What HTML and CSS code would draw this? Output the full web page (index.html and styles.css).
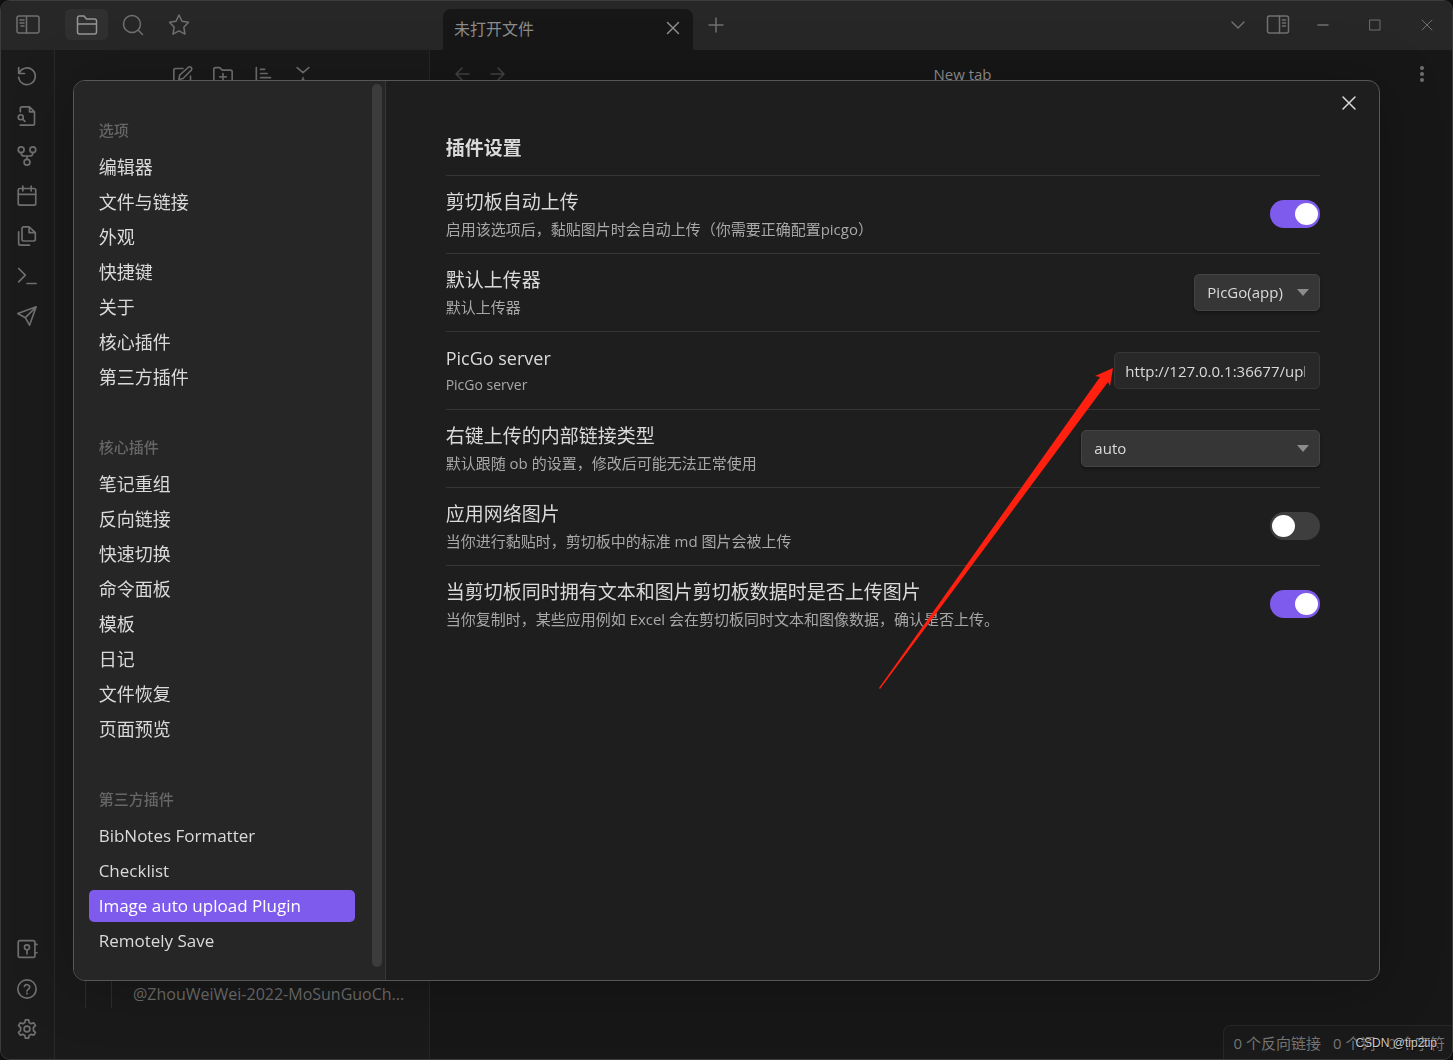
FILE: index.html
```html
<!DOCTYPE html>
<html lang="zh-CN">
<head>
<meta charset="utf-8">
<title>插件设置</title>
<link rel="stylesheet" href="styles.css">
</head>
<body>
<div class="app">
  <header class="titlebar">
    <div class="titlebar-left">
      <button class="icon-btn" aria-label="切换左侧栏"><svg class="icon panel" viewBox="0 0 24 20"><rect x="1" y="1" width="22" height="17" rx="2"/><path d="M10.500 1v17M4 5h4M4 8h4M5 11h3"/></svg></button>
      <nav class="side-tabs">
        <button class="icon-btn tab-btn active" aria-label="文件列表"><svg class="icon large" viewBox="0 0 24 24"><path d="M2.500 19V5a2 2 0 0 1 2-2h4.500l2.500 3h8a2 2 0 0 1 2 2v11a2 2 0 0 1-2 2h-15a2 2 0 0 1-2-2zM2.500 11h19"/></svg></button>
        <button class="icon-btn tab-btn" aria-label="搜索"><svg class="icon large" viewBox="0 0 24 24"><circle cx="11" cy="11" r="8.500"/><path d="m17.500 17.500 4 4"/></svg></button>
        <button class="icon-btn tab-btn" aria-label="星标"><svg class="icon large" viewBox="0 0 24 24"><path d="m12 2 3 6.300 6.500 1-4.700 4.900 1.200 6.900L12 17.800l-6 3.300 1.200-6.900-4.700-4.900 6.500-1z"/></svg></button>
      </nav>
    </div>
    <div class="file-tab"><span>未打开文件</span><button class="icon-btn" aria-label="关闭标签页"><svg class="icon small" viewBox="0 0 12 12"><path d="m.5.5 11 11M11.500.5l-11 11"/></svg></button></div>
    <button class="icon-btn new-tab" aria-label="新建标签页"><svg class="icon medium" viewBox="0 0 16 16"><path d="M8 1v14M1 8h14"/></svg></button>
    <div class="window-tools">
      <button class="icon-btn" aria-label="标签页列表"><svg class="icon small" viewBox="0 0 12 12"><path d="m0 3 6 6 6-6"/></svg></button>
      <button class="icon-btn" aria-label="切换右侧栏"><svg class="icon panel" viewBox="0 0 24 20"><rect x="1.500" y="1" width="21" height="17" rx="2"/><path d="M13.500 1v17M16.500 5h3M16.500 8h3M16.500 11h3"/></svg></button>
    </div>
    <div class="window-controls">
      <button class="icon-btn" aria-label="最小化"><svg class="icon small" viewBox="0 0 12 12"><path d="M1 6h10"/></svg></button>
      <button class="icon-btn" aria-label="最大化"><svg class="icon small thin" viewBox="0 0 12 12"><path d="M1 1h10v10H1z"/></svg></button>
      <button class="icon-btn" aria-label="关闭"><svg class="icon small thin" viewBox="0 0 12 12"><path d="m1 1 10 10M11 1 1 11"/></svg></button>
    </div>
  </header>

  <div class="workspace">
    <aside class="ribbon">
      <button class="icon-btn" aria-label="撤销"><svg class="icon" viewBox="0 0 24 24"><path d="M2 2v7h7M2.500 9A10 10 0 1 1 2 13.500"/></svg></button>
      <button class="icon-btn" aria-label="查找文件"><svg class="icon" viewBox="0 0 24 24"><path d="M4 7V3a2 2 0 0 1 2-2h9l6 6v14a2 2 0 0 1-2 2H4M15 1v6h6"/><circle cx="4.500" cy="13.500" r="3"/><path d="m7 16 2.500 2.500"/></svg></button>
      <button class="icon-btn" aria-label="关系图谱"><svg class="icon" viewBox="0 0 24 24"><circle cx="5" cy="4.500" r="3.500"/><circle cx="19" cy="4.500" r="3.500"/><circle cx="12" cy="19.500" r="3.500"/><path d="M5 8c0 3 1.500 4 4 4h6c2.500 0 4-1 4-4M12 12v4"/></svg></button>
      <button class="icon-btn" aria-label="日记"><svg class="icon" viewBox="0 0 24 24"><rect x="1.500" y="3" width="21" height="20" rx="2"/><path d="M1.500 10h21M7 0v6M17 0v6"/></svg></button>
      <button class="icon-btn" aria-label="模板"><svg class="icon" viewBox="0 0 24 24"><path d="M14.500 1H8a2 2 0 0 0-2 2v13a2 2 0 0 0 2 2h12a2 2 0 0 0 2-2V8zM14.500 1v7H22M2 7v14a2 2 0 0 0 2 2h11"/></svg></button>
      <button class="icon-btn" aria-label="命令面板"><svg class="icon" viewBox="0 0 24 24"><path d="m2 3 8 8-8 8M12 21h11"/></svg></button>
      <button class="icon-btn" aria-label="发布"><svg class="icon" viewBox="0 0 24 24"><path d="M23 1 1 9l9 5 5 9zM23 1 10 14"/></svg></button>
      <div class="ribbon-bottom">
        <button class="icon-btn" aria-label="仓库"><svg class="icon" viewBox="0 0 24 24"><rect x="1.500" y="2" width="20" height="20" rx="2"/><circle cx="12" cy="10" r="3"/><path d="M12 13v5M21.500 6.500H24M21.500 16.500H24"/></svg></button>
        <button class="icon-btn" aria-label="帮助"><svg class="icon" viewBox="0 0 24 24"><circle cx="12" cy="12" r="11"/><path d="M8.800 9a3.300 3.300 0 0 1 6.400 1c0 2.200-3.200 2.800-3.200 4.500M12 17v1"/></svg></button>
        <button class="icon-btn" aria-label="设置"><svg class="icon" viewBox="0 0 24 24"><path d="M10 1h4l.6 3.200 2.400 1.400 3.200-1 2 3.400-2.500 2.200v3.600l2.500 2.200-2 3.400-3.200-1-2.400 1.400L14 23h-4l-.6-3.200L7 18.400l-3.200 1-2-3.400 2.500-2.200v-3.600L1.800 8l2-3.400 3.200 1 2.400-1.400z"/><circle cx="12" cy="12" r="3.500"/></svg></button>
      </div>
    </aside>

    <aside class="file-pane">
      <div class="pane-tools">
        <button class="icon-btn" aria-label="新建笔记"><svg class="icon" viewBox="0 0 24 24"><path d="M12 3H3a2 2 0 0 0-2 2v16a2 2 0 0 0 2 2h16a2 2 0 0 0 2-2v-9M18.500 1.500a2.500 2.500 0 0 1 3.500 3.500L12 15l-5 1 1-5z"/></svg></button>
        <button class="icon-btn" aria-label="新建文件夹"><svg class="icon" viewBox="0 0 24 24"><path d="M1 20V4a2 2 0 0 1 2-2h5l3 3h10a2 2 0 0 1 2 2v13a2 2 0 0 1-2 2H3a2 2 0 0 1-2-2zM12 9v8M8 13h8"/></svg></button>
        <button class="icon-btn" aria-label="排序"><svg class="icon" viewBox="0 0 24 24"><path d="M4 2v20M9 4h5M9 9h8M9 14h12"/></svg></button>
        <button class="icon-btn" aria-label="折叠"><svg class="icon" viewBox="0 0 24 24"><path d="m5 2 7 6 7-6M12 14v1M5 22l7-6 7 6"/></svg></button>
      </div>
      <div class="tree"><div class="tree-level"><a class="tree-file" href="#note">@ZhouWeiWei-2022-MoSunGuoCh...</a></div></div>
    </aside>

    <main class="view">
      <div class="view-header">
        <div class="history">
          <button class="icon-btn" aria-label="后退"><svg class="icon medium" viewBox="0 0 16 16"><path d="M15 8H2M8 2 2 8l6 6"/></svg></button>
          <button class="icon-btn" aria-label="前进"><svg class="icon medium" viewBox="0 0 16 16"><path d="M1 8h13M8 2l6 6-6 6"/></svg></button>
        </div>
        <span class="view-title">New tab</span>
        <button class="icon-btn" aria-label="更多选项"><svg class="icon medium dots" viewBox="0 0 16 16"><circle cx="8" cy="2" r="2"/><circle cx="8" cy="8" r="2"/><circle cx="8" cy="14" r="2"/></svg></button>
      </div>
      <footer class="status-bar"><span>0 个反向链接</span><span>0 个词</span><span>0 个字符</span><span class="watermark">CSDN @tip2tip</span></footer>
    </main>
  </div>
</div>

<div class="modal" role="dialog" aria-label="设置">
  <div class="modal-side">
    <nav class="menu">
      <section class="menu-group">
        <h3>选项</h3>
        <a href="#editor">编辑器</a>
        <a href="#files">文件与链接</a>
        <a href="#appearance">外观</a>
        <a href="#hotkeys">快捷键</a>
        <a href="#about">关于</a>
        <a href="#core">核心插件</a>
        <a href="#community">第三方插件</a>
      </section>
      <section class="menu-group">
        <h3>核心插件</h3>
        <a href="#composer">笔记重组</a>
        <a href="#backlinks">反向链接</a>
        <a href="#switcher">快速切换</a>
        <a href="#palette">命令面板</a>
        <a href="#templates">模板</a>
        <a href="#daily">日记</a>
        <a href="#recovery">文件恢复</a>
        <a href="#preview">页面预览</a>
      </section>
      <section class="menu-group latin">
        <h3>第三方插件</h3>
        <a href="#bibnotes">BibNotes Formatter</a>
        <a href="#checklist">Checklist</a>
        <a href="#image-upload" class="current">Image auto upload Plugin</a>
        <a href="#remotely">Remotely Save</a>
      </section>
    </nav>
    <div class="scroll-thumb"></div>
  </div>

  <div class="settings">
    <h2>插件设置</h2>
    <div class="setting">
      <div class="setting-info"><label class="name" for="auto">剪切板自动上传</label><p>启用该选项后，黏贴图片时会自动上传（你需要正确配置picgo）</p></div>
      <input class="toggle" type="checkbox" id="auto" checked>
    </div>
    <div class="setting">
      <div class="setting-info"><label class="name" for="uploader">默认上传器</label><p>默认上传器</p></div>
      <div class="select"><select id="uploader"><option>PicGo(app)</option></select></div>
    </div>
    <div class="setting">
      <div class="setting-info"><label class="name name-latin" for="server">PicGo server</label><p class="desc-latin">PicGo server</p></div>
      <input class="text" type="text" id="server" value="http://127.0.0.1:36677/upload">
    </div>
    <div class="setting">
      <div class="setting-info"><label class="name" for="linktype">右键上传的内部链接类型</label><p>默认跟随 ob 的设置，修改后可能无法正常使用</p></div>
      <div class="select wide"><select id="linktype"><option>auto</option></select></div>
    </div>
    <div class="setting">
      <div class="setting-info"><label class="name" for="network">应用网络图片</label><p>当你进行黏贴时，剪切板中的标准 md 图片会被上传</p></div>
      <input class="toggle" type="checkbox" id="network">
    </div>
    <div class="setting">
      <div class="setting-info"><label class="name" for="both">当剪切板同时拥有文本和图片剪切板数据时是否上传图片</label><p>当你复制时，某些应用例如 Excel 会在剪切板同时文本和图像数据，确认是否上传。</p></div>
      <input class="toggle" type="checkbox" id="both" checked>
    </div>
  </div>
  <button class="icon-btn modal-close" aria-label="关闭设置"><svg class="icon medium" viewBox="0 0 16 16"><path d="m2 2 12 12M14 2 2 14"/></svg></button>
  <svg class="arrow" viewBox="0 0 236 322"><path d="M235 1 217 9l5 1L1 321l1 1L230 15l2 4z"/></svg>
</div>
</body>
</html>
```

FILE: styles.css
```css
* { box-sizing: border-box; }

body {
  margin: 0;
  background: #101010;
  color: #dadada;
  font-family: "Open Sans", "Noto Sans CJK SC", sans-serif;
  font-size: 15px;
}

button, input, select { font: inherit; color: inherit; }
h2, h3, p { margin: 0; }
a { color: inherit; text-decoration: none; }

.icon-btn {
  display: flex;
  align-items: center;
  justify-content: center;
  padding: 0;
  border: 0;
  background: none;
  color: #707070;
}

.icon {
  display: block;
  width: 20px;
  height: 20px;
  fill: none;
  stroke: currentColor;
  stroke-width: 2;
  stroke-linecap: round;
  stroke-linejoin: round;
  overflow: visible;
}
.icon.panel { width: 24px; stroke-width: 1.5; }
.icon.large { width: 24px; height: 24px; stroke-width: 1.5; }
.icon.medium { width: 16px; height: 16px; stroke-width: 1.5; }
.icon.small { width: 12px; height: 12px; stroke-width: 1.5; }
.icon.thin { stroke-width: 1; }
.icon.dots { fill: currentColor; stroke: none; }

/* Window */
.app {
  display: flex;
  flex-direction: column;
  height: 100vh;
  border: 1px solid #3c3c3c;
  border-radius: 10px;
  background: #171717;
  overflow: hidden;
}

.titlebar {
  display: flex;
  align-items: center;
  height: 49px;
  padding-bottom: 2px;
  background: #272727;
}
.titlebar-left {
  display: flex;
  align-items: center;
  gap: 25px;
  width: 442px;
  padding-left: 15px;
}
.side-tabs { display: flex; gap: 3px; }
.tab-btn { width: 43px; height: 31px; border-radius: 5px; }
.tab-btn.active { background: #303030; color: #959595; }

.file-tab {
  display: flex;
  align-items: center;
  justify-content: space-between;
  align-self: flex-end;
  width: 250px;
  height: 41px;
  margin-bottom: -2px;
  padding: 0 14px 4px 11px;
  border-radius: 8px 8px 0 0;
  background: #171717;
  color: #8c8c8c;
  font-size: 16px;
}
.file-tab .icon-btn { color: #8c8c8c; }
.new-tab { margin-left: 15px; }
.window-tools { display: flex; align-items: center; gap: 22px; margin-left: auto; }
.window-controls {
  display: flex;
  gap: 40px;
  padding: 0 19px 0 27px;
}

.workspace { display: flex; flex: 1; min-height: 0; }
.ribbon {
  display: flex;
  flex-direction: column;
  align-items: center;
  gap: 20px;
  width: 54px;
  padding: 16px 2px 20px 0;
  border-right: 1px solid #292929;
  background: #1b1b1b;
}
.ribbon-bottom {
  display: flex;
  flex-direction: column;
  gap: 20px;
  margin-top: auto;
}

.file-pane {
  display: flex;
  flex-direction: column;
  width: 375px;
  border-right: 1px solid #262626;
  background: #1a1a1a;
}
.pane-tools {
  display: flex;
  justify-content: center;
  gap: 20px;
  padding: 16px 0 0 1px;
}
.tree {
  margin: auto 0 51px 30px;
  padding-left: 25px;
  border-left: 1px solid #2d2d2d;
}
.tree-level { padding-left: 21px; border-left: 1px solid #2d2d2d; }
.tree-file {
  display: block;
  color: #6c6c6c;
  font-size: 16px;
  line-height: 28px;
  white-space: nowrap;
}

.view { display: flex; flex: 1; flex-direction: column; min-width: 0; }
.view-header {
  display: grid;
  grid-template-columns: 1fr auto 1fr;
  align-items: center;
  height: 47px;
  padding: 0 22px 0 24px;
  color: #929292;
}
.view-header > .icon-btn { justify-self: end; }
.history { display: flex; gap: 20px; }
.history .icon-btn { color: #454545; }
.view-title { padding-left: 41px; line-height: 24px; }

.status-bar {
  position: relative;
  display: flex;
  gap: 12px;
  align-self: flex-end;
  margin-top: auto;
  padding: 5px 7px 3px 10px;
  border: 1px solid #272727;
  border-width: 1px 0 0 1px;
  border-radius: 8px 0 0 0;
  background: #1a1a1a;
  color: #747474;
  line-height: 25px;
  white-space: nowrap;
}
.watermark {
  position: absolute;
  right: 15px;
  color: #c8c8c8;
  font-family: "Liberation Sans", sans-serif;
  font-size: 12px;
  text-shadow: 1px 1px 1px #000;
}

/* Settings dialog */
.modal {
  position: fixed;
  inset: 0;
  display: flex;
  width: 90vw;
  height: 85vh;
  margin: auto;
  border: 1px solid #575757;
  border-radius: 12px;
  background: #1e1e1e;
  box-shadow: 0 4px 60px rgba(0, 0, 0, 0.25);
}
.modal-side {
  display: flex;
  flex: none;
  width: 312px;
  border-right: 1px solid #363636;
  border-radius: 11px 0 0 11px;
  background: #262626;
}
.menu { flex: 1; padding: 38px 17px 0 15px; }
.menu-group { display: flex; flex-direction: column; gap: 3px; margin-bottom: 43px; }
.menu-group h3 {
  margin-bottom: 7px;
  padding-left: 10px;
  color: #666;
  font-size: 15px;
  font-weight: 500;
  line-height: 22px;
}
.menu-group a {
  padding-left: 10px;
  border-radius: 5px;
  font-size: 18px;
  line-height: 32px;
}
.menu-group.latin a { font-size: 17px; }
.menu-group .current { background: #7f5bed; color: #fff; }
.scroll-thumb {
  width: 10px;
  margin: 3px 3px 13px 0;
  border-radius: 5px;
  background: #3c3c3c;
}

.settings { flex: 1; min-width: 0; padding: 52px 59px 0 60px; }
.settings h2 { padding-bottom: 11px; font-size: 19px; font-weight: 700; line-height: 31px; }
.setting {
  display: flex;
  align-items: center;
  justify-content: space-between;
  height: 78px;
  border-top: 1px solid #363636;
}
.setting-info { display: flex; flex-direction: column; gap: 3px; }
.name { font-size: 19px; line-height: 26px; }
.name-latin { font-size: 18px; }
.setting p { color: #a8a8a8; font-size: 15px; line-height: 22px; }
.setting .desc-latin { font-size: 14px; }

.toggle {
  appearance: none;
  width: 50px;
  height: 28px;
  margin: 0;
  padding: 3px 2px;
  border-radius: 14px;
  background: #3e3e3e;
}
.toggle::before {
  content: "";
  display: block;
  width: 23px;
  height: 22px;
  border-radius: 50%;
  background: #fff;
}
.toggle:checked { padding-left: 25px; background: #7f5bed; }

.select { position: relative; width: 126px; }
.select.wide { width: 239px; }
.select select {
  appearance: none;
  display: block;
  width: 100%;
  height: 37px;
  padding: 0 12px;
  border: 1px solid #444;
  border-radius: 5px;
  background: #363636;
  box-shadow: 0 2px 3px rgba(0, 0, 0, 0.3);
}
.select::after {
  content: "";
  position: absolute;
  top: 15px;
  right: 11px;
  border: 6px solid transparent;
  border-top: 7px solid #8c8c8c;
  border-bottom: 0;
}
.text {
  width: 206px;
  height: 37px;
  padding: 2px 14px 0 10px;
  border: 1px solid #363636;
  border-radius: 5px;
  background: #282828;
}

.modal-close { position: absolute; top: 14px; right: 22px; color: #dadada; }
.arrow { position: absolute; top: 286px; right: 265px; width: 236px; height: 322px; fill: #ff2010; }
```
